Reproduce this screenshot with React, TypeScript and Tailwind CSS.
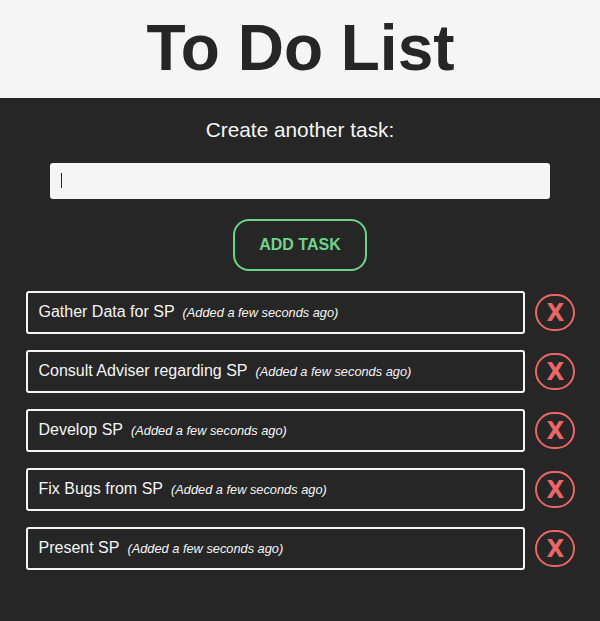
const tasks = [
  "Gather Data for SP",
  "Consult Adviser regarding SP",
  "Develop SP",
  "Fix Bugs from SP",
  "Present SP",
];

export default function App() {
  return (
    <div className="h-[621px] w-[600px] overflow-hidden bg-[#262626] font-['Liberation_Sans',Arial,sans-serif] text-[#f5f5f5]">
      <header className="flex h-[98px] items-center justify-center bg-[#f5f5f5]">
        <h1 className="pb-[2px] pl-px text-[64px] leading-[96px] font-bold text-[#262626]">To Do List</h1>
      </header>
      <main className="flex flex-col items-center">
        <h2 className="mt-5 text-[20.8px] leading-6">Create another task:</h2>
        <div className="mt-[21px] flex h-9 w-[500px] items-center rounded-[3px] bg-[#f5f5f5] pl-[11px]">
          <span className="mb-px h-[15px] w-px bg-[#262626]" />
        </div>
        <button className="mt-5 h-[52px] w-[134px] rounded-2xl border-2 border-[#6cd588] text-base font-bold text-[#6cd588]">
          ADD TASK
        </button>
        <ul className="mt-5 flex w-[549px] flex-col gap-4">
          {tasks.map((task) => (
            <li key={task} className="flex h-[43px] items-center gap-[10px]">
              <div className="h-[43px] w-[499px] rounded-[3px] border-2 border-[#f5f5f5] pl-[11px] text-base leading-[37px]">
                {task}
                <span className="ml-2 text-[12.8px] italic">(Added a few seconds ago)</span>
              </div>
              <button className="mb-px flex h-[37px] w-10 items-center justify-center rounded-[20px] border-2 border-[#eb6767] pt-px pl-[2px] font-['DejaVu_Sans_Condensed','DejaVu_Sans',sans-serif] text-[25.6px] leading-none font-bold text-[#eb6767]">
                X
              </button>
            </li>
          ))}
        </ul>
      </main>
    </div>
  );
}
